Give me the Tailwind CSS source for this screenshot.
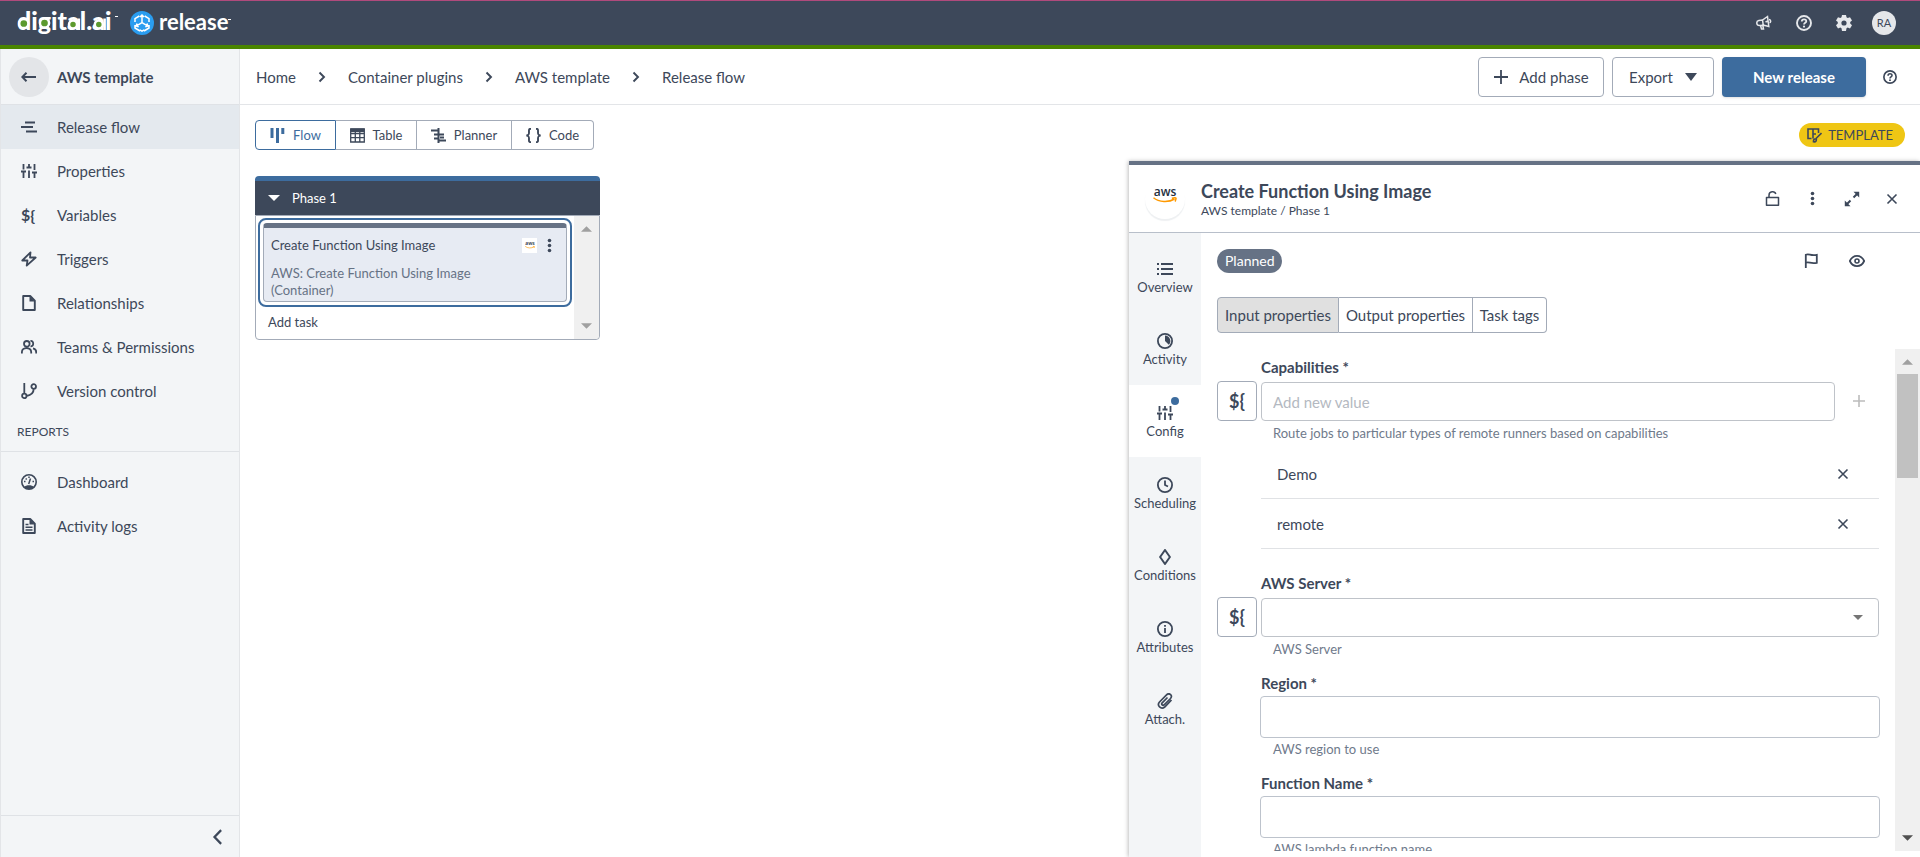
<!DOCTYPE html>
<html lang="en">
<head>
<meta charset="utf-8">
<title>Release flow</title>
<script src="https://cdn.jsdelivr.net/npm/@tailwindcss/browser@4"></script>
</head>
<body class="flex h-screen flex-col overflow-hidden bg-white font-['Lato',sans-serif] text-[15px] leading-5 text-[#3d485a]">

<!-- Shared icon shapes -->
<svg class="hidden" aria-hidden="true">
  <symbol id="sliders" viewBox="0 0 16 16"><path fill="none" stroke="currentColor" stroke-width="1.8" d="M2.500 1v5.500M2.500 9v6M0 8.500h5M8 1v3M8 7.500V15M5.500 4.500h5M13.500 1v6M13.500 9.500V15M11 9.500h5"/></symbol>
  <symbol id="help" viewBox="0 0 16 16"><circle cx="8" cy="8" r="7" fill="none" stroke="currentColor" stroke-width="1.9"/><path fill="none" stroke="currentColor" stroke-width="1.8" d="M5.8 6.6C5.8 3.6 10.3 3.7 10.3 6.3C10.3 7.9 8 7.8 8 9.6"/><circle cx="8" cy="11.6" r="1.1" fill="currentColor"/></symbol>
  <symbol id="kebab" viewBox="0 0 16 16"><g fill="currentColor"><circle cx="8" cy="2.7" r="1.9"/><circle cx="8" cy="8" r="1.9"/><circle cx="8" cy="13.3" r="1.9"/></g></symbol>
  <symbol id="cross" viewBox="0 0 16 16"><path fill="none" stroke="currentColor" stroke-width="1.6" d="M3.5 3.5l9 9M12.5 3.5l-9 9"/></symbol>
  <symbol id="chevron" viewBox="0 0 16 16"><path fill="none" stroke="currentColor" stroke-width="1.9" d="M5.500 3.500L10 8l-4.500 4.500"/></symbol>
  <symbol id="down" viewBox="0 0 12 6"><path fill="currentColor" d="M0 0h12L6 6z"/></symbol>
  <symbol id="aws" viewBox="0 0 24 17"><text x="12" y="9.500" text-anchor="middle" font-family="Open Sans, sans-serif" font-size="12" font-weight="600" fill="#252f3e">aws</text><path fill="none" stroke="#f90" stroke-width="1.500" d="M.5 11.800C6 16.500 16 16.600 21.500 13M18.800 12.200c3-.7 4.500-.5 4.200.5s-.5 2-1 2.800"/></symbol>
</svg>

<header class="flex h-[49px] shrink-0 items-center justify-between border-t border-b-4 border-t-[#b04a7c] border-b-[#4a8500] bg-[#3d485a] pr-6 pl-[17px]">
  <a href="#" aria-label="digital.ai release">
    <svg class="h-11 w-[216px]" viewBox="0 0 216 44">
      <g fill="#fff" font-family="Lato, sans-serif">
        <text x="0" y="29" font-size="25" font-weight="900">digital.ai</text>
        <text x="142" y="29" font-size="22" font-weight="700">release</text>
      </g>
      <g fill="#5c9a2e" stroke="#fff" stroke-width="2.500"><circle cx="6.800" cy="22.500" r="4.600"/><circle cx="27.500" cy="22" r="4.600"/><circle cx="56" cy="23.500" r="4"/><circle cx="81.800" cy="23.500" r="4"/></g>
      <path stroke="#fff" stroke-width="2.600" d="M61.800 17.500V29M87.600 17.500V29"/>
      <path stroke="#fff" d="M98 15.500h3M211 18.500h3"/>
      <circle cx="125" cy="22" r="12" fill="#2a9df0"/>
      <g fill="none" stroke="#fff" stroke-width="1.500"><path d="M122.300 15l-4.300 2.600v3.400M127.700 15l4.300 2.600v3.400M118 24v3l5 3M132 24v3l-5 3M125 13.500v8.200M125 21.700l-5.500 3.200M125 21.700l5.500 3.200M123 16l2-2 2 2M120 22.500l-.8 2.500 2.500.8M130 22.500l.8 2.500-2.500.8M122.700 28.800L125 30.200l2.300-1.400"/></g>
    </svg>
  </a>
  <div class="flex items-center gap-6 text-[#e6e8eb]">
    <button aria-label="Announcements"><svg class="size-4" viewBox="0 0 16 16"><path fill="none" stroke="currentColor" stroke-width="1.500" d="M2.800 5.500L6.500 5l5-3.500 1.300 10L8 10.300l-4.500.2C0 10.500 0 6 2.800 5.500zM6.500 5l.8 5.300M4.500 10.500l1 3.500h2l-.7-3.700M9.500 7l2.500-1M13 4.500c1.800 0 2.300 2.700.5 3.200"/></svg></button>
    <button aria-label="Help"><svg class="size-4"><use href="#help"/></svg></button>
    <button aria-label="Settings"><svg class="size-4" viewBox="0 0 16 16"><path fill="currentColor" fill-rule="evenodd" d="M6 0h4l.5 2.300 1.200.7 2.300-.8 2 3.200-1.800 1.600v1.600l1.800 1.600-2 3.200-2.300-.8-1.200.7L10 16H6l-.5-2.700-1.200-.7-2.300.8-2-3.200 1.800-1.600V7L0 5.400l2-3.200 2.300.8 1.200-.7zM8 5.400a2.600 2.600 0 100 5.200 2.600 2.600 0 000-5.200z"/></svg></button>
    <button class="-ml-1 size-6 rounded-full bg-[#e5e7ea] text-[11px] text-[#3d485a]">RA</button>
  </div>
</header>

<div class="flex min-h-0 flex-1">
  <nav class="flex w-60 shrink-0 flex-col border-x border-[#e3e5e8] bg-[#f3f5f7]">
    <div class="flex h-14 shrink-0 items-center gap-2 border-b border-[#dfe2e6] pl-2 font-bold">
      <button aria-label="Back" class="grid size-10 place-items-center rounded-full bg-[#e3e5e8]"><svg class="size-4" viewBox="0 0 16 16"><path fill="none" stroke="currentColor" stroke-width="2" d="M15 8H1.500M5.500 3.800L1.300 8l4.200 4.200"/></svg></button>
      AWS template
    </div>
    <a href="#" class="flex h-11 items-center gap-5 bg-[#e4e9ee] pl-5"><svg class="size-4" viewBox="0 0 16 16"><path stroke="currentColor" stroke-width="2" d="M4 3.500h10M0 8h12M5 12.500h11"/></svg>Release flow</a>
    <a href="#" class="flex h-11 items-center gap-5 pl-5"><svg class="size-4"><use href="#sliders"/></svg>Properties</a>
    <a href="#" class="flex h-11 items-center gap-5 pl-5"><span class="w-4 text-base font-bold">${</span>Variables</a>
    <a href="#" class="flex h-11 items-center gap-5 pl-5"><svg class="size-4" viewBox="0 0 16 16"><path fill="none" stroke="currentColor" stroke-width="1.800" stroke-linejoin="round" d="M9.500 1.300L1.300 9.500h5.200l-.8 5.200L14.700 6.500H9z"/></svg>Triggers</a>
    <a href="#" class="flex h-11 items-center gap-5 pl-5"><svg class="size-4" viewBox="0 0 16 16"><path fill="none" stroke="currentColor" stroke-width="1.900" stroke-linejoin="round" d="M2.200 1h7l4.600 4.600V15H2.200z"/><path fill="currentColor" d="M8.500 1v5.500H14z"/></svg>Relationships</a>
    <a href="#" class="flex h-11 items-center gap-5 pl-5"><svg class="size-4" viewBox="0 0 16 16"><path fill="none" stroke="currentColor" stroke-width="1.800" d="M.9 14.500v-1.500c0-5.300 9.300-5.300 9.300 0v1.500M5.800 2a2.800 2.800 0 100 5.600 2.800 2.800 0 000-5.600M9.500 2c3.600-.5 3.600 5.700 0 5.400M12 9.300c2 .4 3.200 1.700 3.200 3.700v1.500"/></svg>Teams &amp; Permissions</a>
    <a href="#" class="flex h-11 items-center gap-5 pl-5"><svg class="size-4" viewBox="0 0 16 16"><path fill="none" stroke="currentColor" stroke-width="1.800" d="M3.300 0v10.500M3.300 10.700a2.200 2.200 0 100 4.400 2.200 2.200 0 000-4.400M12.700 1.200a2.300 2.300 0 100 4.600 2.300 2.300 0 000-4.600M12.700 5.800c0 4-3 6.500-7.200 7.200"/></svg>Version control</a>
    <div class="flex h-[39px] items-center border-b border-[#dfe2e6] pl-4 text-xs">REPORTS</div>
    <a href="#" class="mt-2 flex h-11 items-center gap-5 pl-5"><svg class="size-4" viewBox="0 0 16 16"><circle cx="8" cy="8" r="7.200" fill="none" stroke="currentColor" stroke-width="1.600"/><path fill="currentColor" d="M3 13c2-2.500 8-2.500 10 0l-2 2H5z"/><path stroke="currentColor" stroke-width="1.500" d="M7.700 10L9.500 4.500M3 7.500h1.500M4.700 4.500l1 1M11.500 7.500H13M8 2.500V4"/></svg>Dashboard</a>
    <a href="#" class="flex h-11 items-center gap-5 pl-5"><svg class="size-4" viewBox="0 0 16 16"><path fill="none" stroke="currentColor" stroke-width="1.900" stroke-linejoin="round" d="M2.200 1h7l4.600 4.600V15H2.200z"/><path fill="currentColor" d="M8.500 1v5.500H14z"/><path stroke="currentColor" stroke-width="1.500" d="M4.500 6.500h3M4.500 9.200h7M4.500 12h7"/></svg>Activity logs</a>
    <div class="mt-auto flex h-[42px] shrink-0 items-center justify-end border-t border-[#dfe2e6] pr-[11px]">
      <button aria-label="Collapse"><svg class="size-5" viewBox="0 0 16 16"><path fill="none" stroke="currentColor" stroke-width="1.800" d="M10.500 2.500L5.200 8l5.300 5.500"/></svg></button>
    </div>
  </nav>

  <main class="flex min-w-0 flex-1 flex-col">
    <div class="flex h-14 shrink-0 items-center justify-between border-b border-[#e3e5e8] pr-[22px] pl-4">
      <ol class="flex items-center gap-[18px]">
        <li><a href="#">Home</a></li><li><svg class="size-4"><use href="#chevron"/></svg></li>
        <li><a href="#">Container plugins</a></li><li><svg class="size-4"><use href="#chevron"/></svg></li>
        <li><a href="#">AWS template</a></li><li><svg class="size-4"><use href="#chevron"/></svg></li>
        <li><a href="#">Release flow</a></li>
      </ol>
      <div class="flex items-center gap-2">
        <button class="flex h-10 w-[126px] items-center justify-center gap-2.5 rounded border border-[#a3abb8]"><svg class="size-4" viewBox="0 0 16 16"><path stroke="currentColor" stroke-width="1.800" d="M8 1v14M1 8h14"/></svg>Add phase</button>
        <button class="flex h-10 w-[102px] items-center justify-center gap-3 rounded border border-[#a3abb8]">Export<svg class="h-2 w-3" viewBox="0 0 12 8"><path fill="currentColor" d="M0 0h12L6 8z"/></svg></button>
        <button class="h-10 w-36 rounded bg-[#3d6c9e] font-bold text-white shadow">New release</button>
        <button aria-label="Help" class="ml-2 p-[1px]"><svg class="size-[14px]"><use href="#help"/></svg></button>
      </div>
    </div>

    <div class="flex h-14 shrink-0 items-center justify-between px-[15px] pt-1">
      <div class="flex h-[30px] text-[13px]">
        <button class="flex w-[81px] items-center justify-center gap-2 rounded-l border border-[#3d6c9e] text-[#3d6c9e]"><svg class="size-[15px]" viewBox="0 0 15 15"><path stroke="currentColor" stroke-width="3" d="M2 0v10M7.500 0v15M12.800 0v6"/></svg>Flow</button>
        <button class="flex w-[81px] items-center justify-center gap-2 border-y border-r border-[#a3abb8]"><svg class="size-[15px]" viewBox="0 0 15 15"><path fill="none" stroke="currentColor" stroke-width="1.300" d="M.7 1h13.600v13H.7zM.7 5.500h13.600M.7 9.700h13.600M5.300 3v11M9.800 3v11"/><path fill="currentColor" d="M.7.500h13.600V4H.7z"/></svg>Table</button>
        <button class="flex w-[95px] items-center justify-center gap-2 border-y border-r border-[#a3abb8]"><svg class="size-[15px]" viewBox="0 0 15 15"><path stroke="currentColor" stroke-width="2" d="M7.500 0v15M0 2.500h7M3 6.500h10M3 10.500h5M7 12.500h8M9 9.500h4"/></svg>Planner</button>
        <button class="flex w-[82px] items-center justify-center gap-2 rounded-r border-y border-r border-[#a3abb8]"><svg class="size-[15px]" viewBox="0 0 15 15"><path fill="none" stroke="currentColor" stroke-width="1.900" d="M5 .8C2.500.8 3 2 3 4.500S2.500 7 .5 7.500C2.500 8 3 8 3 10.500s-.5 3.700 2 3.700M10 .8c2.500 0 2 1.200 2 3.700s.5 2.500 2.500 3C12.500 8 12 8 12 10.500s.5 3.700-2 3.700"/></svg>Code</button>
      </div>
      <div class="flex h-6 items-center gap-1.5 rounded-full bg-[#efc614] px-2 pr-3 text-[13px]"><svg class="size-[15px]" viewBox="0 0 15 15"><path fill="none" stroke="currentColor" stroke-width="1.600" d="M4.500 10.500H1V1h10.500v4M6 1v9.500M6 6h3M14.500 5L9 10.500M6.500 13.800c2.500.5 3-.8 2.800-3-2-.2-3 .8-2.800 3z"/></svg>TEMPLATE</div>
    </div>

    <div class="flex min-h-0 flex-1">
      <section class="min-w-0 flex-1 px-[15px] pt-[15px] text-[13px] leading-[17px]">
        <div class="w-[345px]">
          <h2 class="flex h-[39px] items-center gap-3 rounded-t border-t-[5px] border-[#3d6c9e] bg-[#3d485a] pl-[13px] text-white"><svg class="h-1.5 w-3"><use href="#down"/></svg>Phase 1</h2>
          <div class="flex h-[125px] rounded-b border border-[#a3abb8]">
            <div class="min-w-0 flex-1 p-0.5">
              <div class="rounded-lg border-2 border-[#3d6c9e] p-[3px]">
                <div class="h-[79px] rounded border border-t-[5px] border-[#a3abb8] border-t-[#667285] bg-[#e7ebf3] pr-[9px] pl-[7px]">
                  <div class="mb-[3px] flex h-[34px] items-center">
                    <span class="flex-1">Create Function Using Image</span>
                    <span class="grid size-[15px] place-items-center bg-white"><svg class="h-2 w-[10px]"><use href="#aws"/></svg></span>
                    <button aria-label="Task actions" class="ml-[5px]"><svg class="size-[15px]"><use href="#kebab"/></svg></button>
                  </div>
                  <p class="w-56 text-[#667285]">AWS: Create Function Using Image (Container)</p>
                </div>
              </div>
              <button class="mt-[7px] ml-2.5 block">Add task</button>
            </div>
            <div class="flex w-[25px] flex-col items-center justify-between rounded-br bg-[#f0f0f0] py-[10px] text-[#a0a0a0]">
              <svg class="h-1.5 w-[11px] rotate-180"><use href="#down"/></svg>
              <svg class="h-1.5 w-[11px]"><use href="#down"/></svg>
            </div>
          </div>
        </div>
      </section>

      <aside class="flex w-[791px] shrink-0 flex-col border-t-4 border-[#667285] bg-white shadow-[-1px_0_4px_rgba(0,0,0,0.25)]">
        <div class="flex h-[68px] shrink-0 items-center border-b border-[#b8bfca] pr-2 pl-4">
          <div class="grid size-10 place-items-center rounded-full shadow-[0_2px_1px_#eef0f2]"><svg class="mb-2 h-[17px] w-6"><use href="#aws"/></svg></div>
          <div class="ml-4 flex-1">
            <h1 class="text-lg leading-6 font-bold">Create Function Using Image</h1>
            <p class="text-xs leading-4">AWS template / Phase 1</p>
          </div>
          <button aria-label="Unlock" class="grid size-10 place-items-center"><svg class="size-[15px]" viewBox="0 0 15 15"><path fill="none" stroke="currentColor" stroke-width="1.500" stroke-linejoin="round" d="M1.500 6.500h12v7.700h-12zM4 6.500V4.300C4 0 9.800-.2 10.800 3"/></svg></button>
          <button aria-label="More" class="grid size-10 place-items-center"><svg class="size-[15px]"><use href="#kebab"/></svg></button>
          <button aria-label="Expand" class="grid size-10 place-items-center"><svg class="size-4" viewBox="0 0 16 16"><path stroke="currentColor" stroke-width="2" d="M2 14l4.500-4.500M9.500 6.500L14 2"/><path fill="currentColor" d="M.8 15.200V9.500l5.700 5.700zM15.200.8v5.700L9.500.8z"/></svg></button>
          <button aria-label="Close" class="grid size-10 place-items-center"><svg class="size-4"><use href="#cross"/></svg></button>
        </div>

        <div class="flex min-h-0 flex-1">
          <div class="w-[72px] shrink-0 bg-[#f3f5f7] pt-2 text-[13px] leading-4">
            <button class="flex h-[72px] w-full flex-col items-center justify-center gap-0.5 pt-0.5"><svg class="size-4" viewBox="0 0 16 16"><path stroke="currentColor" stroke-width="1.900" d="M4 3h12M4 8h12M4 13h12M0 3h2M0 8h2M0 13h2"/></svg>Overview</button>
            <button class="flex h-[72px] w-full flex-col items-center justify-center gap-0.5 pt-0.5"><svg class="size-4" viewBox="0 0 16 16"><circle cx="8" cy="8" r="7.100" fill="none" stroke="currentColor" stroke-width="1.800"/><path fill="currentColor" d="M8 2.500v5.500l3.800 3.800A5.500 5.500 0 008 2.500z"/></svg>Activity</button>
            <button class="flex h-[72px] w-full flex-col items-center justify-center gap-0.5 bg-white pt-0.5"><span class="relative"><svg class="size-4"><use href="#sliders"/></svg><i class="absolute -top-2 -right-1.5 size-2 rounded-full bg-[#3d6c9e]"></i></span>Config</button>
            <button class="flex h-[72px] w-full flex-col items-center justify-center gap-0.5 pt-0.5"><svg class="size-4" viewBox="0 0 16 16"><path fill="none" stroke="currentColor" stroke-width="1.800" d="M8 .9a7.100 7.100 0 100 14.200A7.100 7.100 0 008 .9M8 3.500V8l3 1.500"/></svg>Scheduling</button>
            <button class="flex h-[72px] w-full flex-col items-center justify-center gap-0.5 pt-0.5"><svg class="size-4" viewBox="0 0 16 16"><path fill="none" stroke="currentColor" stroke-width="2" stroke-linejoin="round" d="M8 1l4.900 7L8 15 3.100 8z"/></svg>Conditions</button>
            <button class="flex h-[72px] w-full flex-col items-center justify-center gap-0.5 pt-0.5"><svg class="size-4" viewBox="0 0 16 16"><path fill="none" stroke="currentColor" stroke-width="1.800" d="M8 .9a7.100 7.100 0 100 14.200A7.100 7.100 0 008 .9M8 7v5M8 4v1.700"/></svg>Attributes</button>
            <button class="flex h-[72px] w-full flex-col items-center justify-center gap-0.5 pt-0.5"><svg class="size-4" viewBox="0 0 16 16"><path fill="none" stroke="currentColor" stroke-width="1.700" d="M10.500 4.500L5.200 9.800c-1.300 1.500.5 3.200 2 2L13.500 5.500C16 2.500 12.500-.5 10 1.500L2.500 9c-3 3.500 1.500 8 5.200 5L14.500 7"/></svg>Attach.</button>
          </div>

          <div class="flex min-w-0 flex-1 flex-col pb-1.5">
            <div class="flex items-center pt-4 pr-[55px] pl-4">
              <span class="flex h-6 items-center rounded-full bg-[#667285] px-2 text-sm text-white">Planned</span>
              <button aria-label="Flag" class="mr-[30px] ml-auto"><svg class="size-4" viewBox="0 0 16 16"><path fill="none" stroke="currentColor" stroke-width="1.800" d="M2.800 15V1.800c3-1.600 5 1.500 11 0v8c-6 1.500-8-1.500-11 0"/></svg></button>
              <button aria-label="Watch"><svg class="size-4" viewBox="0 0 16 16"><path fill="none" stroke="currentColor" stroke-width="1.800" d="M.8 8c3.200-6.900 11.200-6.900 14.400 0-3.200 6.900-11.200 6.900-14.400 0z"/><circle cx="8" cy="8" r="2" fill="none" stroke="currentColor" stroke-width="1.600"/></svg></button>
            </div>
            <div class="mt-6 ml-4 flex h-9">
              <button class="w-[122px] rounded-l border border-[#a3abb8] bg-[#e0e0e0]">Input properties</button>
              <button class="w-[134px] border-y border-r border-[#a3abb8]">Output properties</button>
              <button class="w-[74px] rounded-r border-y border-r border-[#a3abb8]">Task tags</button>
            </div>

            <div class="mt-4 flex min-h-0 flex-1">
              <form class="min-w-0 flex-1 overflow-hidden pt-2 pr-4 pl-[60px]">
                <label for="cap" class="block font-bold">Capabilities *</label>
                <div class="mt-1 -ml-11 flex items-end">
                  <button type="button" aria-label="Use variable" class="mr-1 size-10 rounded border border-[#a3abb8] text-lg font-bold">${</button>
                  <input id="cap" placeholder="Add new value" class="h-[39px] min-w-0 flex-1 rounded border border-[#bfc3c9] px-[11px] placeholder-[#b4b9c1]">
                  <button type="button" aria-label="Add" class="grid h-10 w-11 place-items-center pl-1 text-[#bcbcbc]"><svg class="size-3.5" viewBox="0 0 14 14"><path stroke="currentColor" stroke-width="1.600" d="M7 1v12M1 7h12"/></svg></button>
                </div>
                <p class="mt-1 pl-3 text-[13px] leading-4 text-[#6f7a8b]">Route jobs to particular types of remote runners based on capabilities</p>
                <ul class="mt-2">
                  <li class="flex h-[50px] items-center justify-between border-b border-[#e0e2e5] pr-7 pl-4">Demo<button type="button" aria-label="Remove Demo"><svg class="size-4"><use href="#cross"/></svg></button></li>
                  <li class="flex h-[50px] items-center justify-between border-b border-[#e0e2e5] pr-7 pl-4">remote<button type="button" aria-label="Remove remote"><svg class="size-4"><use href="#cross"/></svg></button></li>
                </ul>
                <label for="srv" class="mt-6 block font-bold">AWS Server *</label>
                <div class="mt-1 -ml-11 flex items-end">
                  <button type="button" aria-label="Use variable" class="mr-1 size-10 rounded border border-[#a3abb8] text-lg font-bold">${</button>
                  <div class="relative flex-1">
                    <select id="srv" class="block h-[39px] w-full appearance-none rounded border border-[#bfc3c9]"><option></option></select>
                    <svg class="pointer-events-none absolute top-[17px] right-4 h-[5px] w-2.5 text-[#757575]"><use href="#down"/></svg>
                  </div>
                </div>
                <p class="mt-1 pl-3 text-[13px] leading-4 text-[#6f7a8b]">AWS Server</p>
                <label for="reg" class="mt-4 block font-bold">Region *</label>
                <div class="-mx-px mt-[3px]"><input id="reg" class="block h-[42px] w-full rounded border border-[#bdc3cc] px-3"></div>
                <p class="mt-[3px] pl-3 text-[13px] leading-4 text-[#6f7a8b]">AWS region to use</p>
                <label for="fn" class="mt-4 block font-bold">Function Name *</label>
                <div class="-mx-px mt-[3px]"><input id="fn" class="block h-[42px] w-full rounded border border-[#bdc3cc] px-3"></div>
                <p class="mt-[3px] pl-3 text-[13px] leading-4 text-[#6f7a8b]">AWS lambda function name</p>
              </form>
              <div class="flex w-[25px] shrink-0 flex-col items-center justify-between bg-[#f0f0f0] py-[10px]">
                <div class="flex flex-col items-center gap-[9px]">
                  <svg class="h-1.5 w-[11px] rotate-180 text-[#a0a0a0]"><use href="#down"/></svg>
                  <div class="h-[104px] w-[21px] bg-[#c1c1c1]"></div>
                </div>
                <svg class="h-1.5 w-[11px] text-[#505050]"><use href="#down"/></svg>
              </div>
            </div>
          </div>
        </div>
      </aside>
    </div>
  </main>
</div>
</body>
</html>
